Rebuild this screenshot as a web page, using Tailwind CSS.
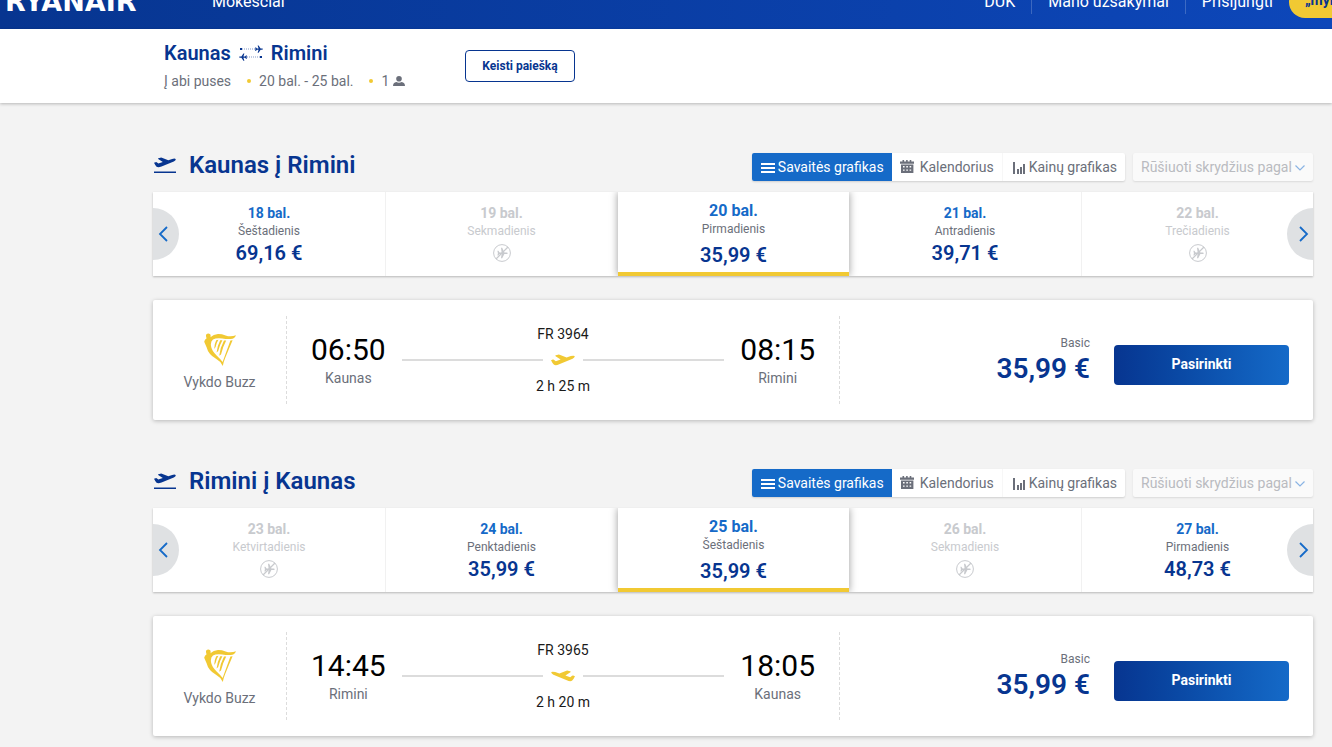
<!DOCTYPE html>
<html lang="lt">
<head>
  <meta charset="UTF-8" />
  <meta name="viewport" content="width=device-width, initial-scale=1.0" />
  <title>Kaunas - Rimini | Ryanair</title>
  <script src="https://cdn.jsdelivr.net/npm/@tailwindcss/browser@4"></script>
</head>
<body class="bg-[#f3f3f3] font-['Roboto','Liberation_Sans',sans-serif] text-sm leading-5 text-[#6b6f7a] overflow-x-hidden">

  <!-- shared icons -->
  <svg class="hidden">
    <symbol id="plane" viewBox="0 0 24 12">
      <path d="M0 6.2 1.8 5.6Q2.4 5.4 2.9 5.8L4.8 7.2 9.6 5.5 4.6 2.2Q4 1.6 4.8 1.3L7 .7Q7.8.4 8.6.8L15.6 3.5 19.8 2.1Q22.8 1.2 23.6 2.1 24.2 3.4 21.6 4.8L8.2 10.3Q4.6 11.8 2.8 10.6 1.6 9.4 0 6.2Z" />
    </symbol>
    <symbol id="no-flight" viewBox="0 0 18 18">
      <circle cx="9" cy="9" r="8.4" fill="none" stroke="currentColor" />
      <path d="M3 15 15 3" stroke="currentColor" stroke-width="1.2" />
      <path fill="currentColor" d="M4.4 6.8h1l1.2 1.6h2L8 3.8h1.2l2.2 4.6h2.2q1.2.3 1.2.8t-1.2.8h-2.2l-2.2 4.2H8l.6-4.2h-2l-1.2 1.4h-1l.5-2.1z" />
    </symbol>
    <symbol id="chevron-left" viewBox="0 0 10 16">
      <path d="M9 1 2 8l7 7" fill="none" stroke="currentColor" stroke-width="1.8" />
    </symbol>
    <symbol id="chevron-right" viewBox="0 0 10 16">
      <path d="m1 1 7 7-7 7" fill="none" stroke="currentColor" stroke-width="1.8" />
    </symbol>
    <symbol id="list" viewBox="0 0 14 12">
      <path d="M0 1h14v2H0zM0 5h14v2H0zM0 9h14v2H0z" />
    </symbol>
    <symbol id="calendar" viewBox="0 0 14 13">
      <path fill-rule="evenodd" d="M2.5 0h1.6v1.5h2V0h1.6v1.5h2V0h1.6v1.5H14v2.3H0V1.500h2.500zM1 4.400h12.400V13H1zM3 6v1.400h1.600V6zm3.300 0v1.400h1.600V6zm3.300 0v1.400h1.600V6zM3 9.400v1.400h1.600V9.400zm3.300 0v1.400h1.600V9.400zm3.300 0v1.400h1.600V9.400z" />
    </symbol>
    <symbol id="bars" viewBox="0 0 12 12">
      <path d="M0 0h2v12H0zM4 7h2v5H4zM7 5h2v7H7zM10 2h2v10h-2z" />
    </symbol>
    <symbol id="harp" viewBox="0 0 32 33">
      <path d="M2.2 1.4Q4.2-.1 6.2 1.3 7 2.6 6.4 4.2 9.4 1.2 14 1 17.6.9 21.6 2.4 26.6 4.2 32 2.2 30.8 5.6 26.6 6 22.4 6.2 18.2 5.4 12 4.6 9 6.6 6.4 8.4 7 13 7.6 17.6 12.6 22.4 17 26.4 18.6 29L26.4 7.400 28.600 7.200Q24.600 16.600 21.400 24.400 19.400 29 18.800 33 16.600 28.200 12 25.800 4.400 21.400 2.600 14.200L.2 8.800Q.6 6.600 2.600 5.200 1.600 3 2.200 1.400Z" />
      <path d="M12.200 7.200 14.400 6.800Q12.400 10 11.600 14L10.200 16Q10.200 11 12.200 7.200ZM16.200 7.200 18.400 7.200Q15.600 12 14.200 18L12.600 19.600Q13.200 12.800 16.200 7.200ZM20 7.600 22.200 7.600Q18.800 14 17 21.600L15.200 22.800Q16.200 14.600 20 7.600Z" />
    </symbol>
  </svg>

  <header class="h-[29px] overflow-hidden flex items-end bg-linear-to-r from-[#073590] to-[#0d47ba] text-white text-base leading-6 whitespace-nowrap">
    <a href="#" class="ml-[5px] mb-[15px] w-[207px] font-['DejaVu_Sans'] font-bold text-[27px]">RYANAIR</a>
    <a href="#" class="mb-[15px]">Mokesčiai</a>
    <nav class="ml-auto flex items-end">
      <a href="#" class="mb-[15px] pr-4">DUK</a>
      <a href="#" class="mb-[15px] px-4 border-x border-white/20">Mano užsakymai</a>
      <a href="#" class="mb-[15px] px-4">Prisijungti</a>
      <a href="#" class="mb-[11px] h-8 w-[43px] pl-4 overflow-hidden rounded-l-full bg-[#f1c933] text-[#073590] text-sm leading-7 font-bold">„myRyanair“</a>
    </nav>
  </header>

  <div class="relative flex items-center gap-15 bg-white pl-[164px] pr-5 py-3 shadow-[0_1px_3px_rgba(0,0,0,0.25)]">
    <div class="flex flex-col gap-[6px]">
      <div class="flex items-center gap-2 text-xl leading-6 font-semibold text-[#073590]">
        Kaunas
        <svg class="w-6 h-4" viewBox="0 0 24 16" fill="#073590">
          <path d="M3 4h13M8 12h13" stroke="#073590" stroke-opacity=".5" stroke-dasharray="1 1" />
          <path d="M1 3h2v2H1zM21 11h2v2h-2z" />
          <path d="M16 2.4h1l1 1.1h1.6L18.6.4h1l2 3.1h1.6q.8.2.8.6t-.8.6h-1.6l-2 3.1h-1l1-3.1H18l-1 1.1h-1l.5-1.7zM8 10.4H7l-1 1.1H4.400L5.400 8.400h-1l-2 3.100H.8Q0 11.700 0 12.100t.8.600h1.600l2 3.100h1l-1-3.100H6l1 1.100h1l-.5-1.700z" />
        </svg>
        Rimini
      </div>
      <div class="flex items-center">
        <span>Į abi puses</span>
        <span class="ml-4 mr-2 size-1 rounded-full bg-[#f1c933]"></span>
        <span>20 bal. - 25 bal.</span>
        <span class="ml-4 mr-2 size-1 rounded-full bg-[#f1c933]"></span>
        <span>1</span>
        <svg class="ml-1 w-3 h-[10px]" viewBox="0 0 12 10" fill="currentColor">
          <circle cx="6" cy="2.800" r="2.800" />
          <path d="M0 10Q0 6.800 3.400 6.100 6 7.400 8.600 6.100 12 6.800 12 10Z" />
        </svg>
      </div>
    </div>
    <button type="button" class="h-8 px-4 rounded border border-[#073590] text-xs font-bold text-[#073590]">Keisti paiešką</button>
  </div>

  <main class="pl-[153px] pr-[19px] pt-[46px] pb-3 flex flex-col gap-[45px]">

    <section>
      <div class="flex items-end">
        <h2 class="flex items-center gap-3 text-2xl leading-8 font-semibold text-[#073590]">
          <svg class="w-6 h-4" viewBox="0 0 24 16" fill="#073590">
            <use href="#plane" x="1" width="22" height="11" />
            <path d="M1 14.500h22V16H1z" />
          </svg>
          Kaunas į Rimini
        </h2>
        <div class="ml-auto flex h-7 rounded-xs bg-white shadow-[0_1px_2px_rgba(0,0,0,0.15)]">
          <button type="button" class="flex items-center gap-[3px] pl-[9px] pr-2 pb-px rounded-l-xs bg-[#156ac8] text-white">
            <svg class="w-[14px] h-3 mt-[2px]" fill="currentColor"><use href="#list" /></svg>Savaitės grafikas
          </button>
          <button type="button" class="flex items-center gap-[6px] px-2 pb-px border-r border-[#f7f7f7]">
            <svg class="w-[14px] h-[13px]" fill="currentColor"><use href="#calendar" /></svg>Kalendorius
          </button>
          <button type="button" class="flex items-center gap-1 pl-[10px] pr-2 pb-px">
            <svg class="w-3 h-3 mt-[2px]" fill="currentColor"><use href="#bars" /></svg>Kainų grafikas
          </button>
        </div>
        <div class="relative ml-2">
          <select aria-label="Rūšiuoti skrydžius pagal" class="w-[180px] h-7 pl-2 appearance-none rounded-xs bg-[#fafafa] text-[#b9bbc0] shadow-[0_1px_2px_rgba(0,0,0,0.1)]">
            <option>Rūšiuoti skrydžius pagal</option>
          </select>
          <svg class="absolute right-2 top-3 w-[10px] h-[6px] pointer-events-none" viewBox="0 0 10 6"><path d="m.5.500 4.500 4.500L9.500.5" fill="none" stroke="#8ab4e4" stroke-width="1.200" /></svg>
        </div>
      </div>

      <div class="relative mt-[11px] grid grid-cols-5 h-21 bg-white text-center shadow-[0_1px_2px_rgba(0,0,0,0.25)]">
        <button type="button" class="pt-[11px] flex flex-col items-center">
          <span class="font-bold text-[#156ac8]">18 bal.</span>
          <span class="text-xs">Šeštadienis</span>
          <span class="text-xl leading-7 font-semibold text-[#073590]">69,16 €</span>
        </button>
        <button type="button" disabled class="pt-[11px] flex flex-col items-center border-l border-[#f1f1f1] text-[#c8cace]">
          <span class="font-bold">19 bal.</span>
          <span class="text-xs">Sekmadienis</span>
          <svg class="mt-[5px] size-[18px]"><use href="#no-flight" /></svg>
        </button>
        <button type="button" class="relative ml-px pt-[9px] flex flex-col items-center bg-white border-b-4 border-[#f1c933] shadow-[0_0_8px_rgba(0,0,0,0.4)] [clip-path:inset(0_-12px_0_-12px)]">
          <span class="text-base leading-5 font-bold text-[#156ac8]">20 bal.</span>
          <span class="text-xs">Pirmadienis</span>
          <span class="mt-1 text-xl leading-7 font-semibold text-[#073590]">35,99 €</span>
        </button>
        <button type="button" class="pt-[11px] flex flex-col items-center">
          <span class="font-bold text-[#156ac8]">21 bal.</span>
          <span class="text-xs">Antradienis</span>
          <span class="text-xl leading-7 font-semibold text-[#073590]">39,71 €</span>
        </button>
        <button type="button" disabled class="pt-[11px] flex flex-col items-center border-l border-[#f1f1f1] text-[#c8cace]">
          <span class="font-bold">22 bal.</span>
          <span class="text-xs">Trečiadienis</span>
          <svg class="mt-[5px] size-[18px]"><use href="#no-flight" /></svg>
        </button>
        <button type="button" aria-label="Atgal" class="absolute left-0 top-4 w-[26px] h-13 pl-[5px] rounded-r-full bg-[#dfe1e3] text-[#156ac8]">
          <svg class="w-[10px] h-4"><use href="#chevron-left" /></svg>
        </button>
        <button type="button" aria-label="Pirmyn" class="absolute right-0 top-4 w-[26px] h-13 pl-3 rounded-l-full bg-[#dfe1e3] text-[#156ac8]">
          <svg class="w-[10px] h-4"><use href="#chevron-right" /></svg>
        </button>
      </div>

      <div class="mt-6 h-30 grid grid-cols-[133px_554fr_473fr] items-center rounded-xs bg-white shadow-[0_1px_4px_rgba(0,0,0,0.25)]">
        <div class="flex flex-col items-center gap-1 pt-[6px]">
          <svg class="w-8 h-[33px]" fill="#f1c933"><use href="#harp" /></svg>
          <span class="leading-6">Vykdo Buzz</span>
        </div>
        <div class="h-22 px-6 flex items-center gap-4 border-x border-dashed border-[#dcdcdc]">
          <div class="text-center">
            <div class="text-[30px] leading-9 text-black">06:50</div>
            <div>Kaunas</div>
          </div>
          <div class="flex-1 text-center text-[#1a1a1a]">
            <div>FR 3964</div>
            <div class="my-[6px] h-5 flex items-center gap-2">
              <span class="h-[2px] flex-1 bg-[#dcdcdc]"></span>
              <svg class="w-6 h-3" fill="#f1c933"><use href="#plane" /></svg>
              <span class="h-[2px] flex-1 bg-[#dcdcdc]"></span>
            </div>
            <div>2 h 25 m</div>
          </div>
          <div class="text-center">
            <div class="text-[30px] leading-9 text-black">08:15</div>
            <div>Rimini</div>
          </div>
        </div>
        <div class="pb-[2px] pr-6 flex justify-end items-end gap-6">
          <div class="text-right">
            <div class="text-xs leading-5">Basic</div>
            <div class="text-[28px] leading-8 font-semibold text-[#073590]">35,99 €</div>
          </div>
          <button type="button" class="w-[175px] h-10 pb-[2px] rounded bg-linear-to-r from-[#073590] to-[#156ac8] font-bold text-white">Pasirinkti</button>
        </div>
      </div>
    </section>

    <section>
      <div class="flex items-end">
        <h2 class="flex items-center gap-3 text-2xl leading-8 font-semibold text-[#073590]">
          <svg class="w-6 h-4" viewBox="0 0 24 16" fill="#073590">
            <use href="#plane" x="1" width="22" height="11" />
            <path d="M1 14.500h22V16H1z" />
          </svg>
          Rimini į Kaunas
        </h2>
        <div class="ml-auto flex h-7 rounded-xs bg-white shadow-[0_1px_2px_rgba(0,0,0,0.15)]">
          <button type="button" class="flex items-center gap-[3px] pl-[9px] pr-2 pb-px rounded-l-xs bg-[#156ac8] text-white">
            <svg class="w-[14px] h-3 mt-[2px]" fill="currentColor"><use href="#list" /></svg>Savaitės grafikas
          </button>
          <button type="button" class="flex items-center gap-[6px] px-2 pb-px border-r border-[#f7f7f7]">
            <svg class="w-[14px] h-[13px]" fill="currentColor"><use href="#calendar" /></svg>Kalendorius
          </button>
          <button type="button" class="flex items-center gap-1 pl-[10px] pr-2 pb-px">
            <svg class="w-3 h-3 mt-[2px]" fill="currentColor"><use href="#bars" /></svg>Kainų grafikas
          </button>
        </div>
        <div class="relative ml-2">
          <select aria-label="Rūšiuoti skrydžius pagal" class="w-[180px] h-7 pl-2 appearance-none rounded-xs bg-[#fafafa] text-[#b9bbc0] shadow-[0_1px_2px_rgba(0,0,0,0.1)]">
            <option>Rūšiuoti skrydžius pagal</option>
          </select>
          <svg class="absolute right-2 top-3 w-[10px] h-[6px] pointer-events-none" viewBox="0 0 10 6"><path d="m.5.500 4.500 4.500L9.500.5" fill="none" stroke="#8ab4e4" stroke-width="1.200" /></svg>
        </div>
      </div>

      <div class="relative mt-[11px] grid grid-cols-5 h-21 bg-white text-center shadow-[0_1px_2px_rgba(0,0,0,0.25)]">
        <button type="button" disabled class="pt-[11px] flex flex-col items-center text-[#c8cace]">
          <span class="font-bold">23 bal.</span>
          <span class="text-xs">Ketvirtadienis</span>
          <svg class="mt-[5px] size-[18px]"><use href="#no-flight" /></svg>
        </button>
        <button type="button" class="pt-[11px] flex flex-col items-center border-l border-[#f1f1f1]">
          <span class="font-bold text-[#156ac8]">24 bal.</span>
          <span class="text-xs">Penktadienis</span>
          <span class="text-xl leading-7 font-semibold text-[#073590]">35,99 €</span>
        </button>
        <button type="button" class="relative ml-px pt-[9px] flex flex-col items-center bg-white border-b-4 border-[#f1c933] shadow-[0_0_8px_rgba(0,0,0,0.4)] [clip-path:inset(0_-12px_0_-12px)]">
          <span class="text-base leading-5 font-bold text-[#156ac8]">25 bal.</span>
          <span class="text-xs">Šeštadienis</span>
          <span class="mt-1 text-xl leading-7 font-semibold text-[#073590]">35,99 €</span>
        </button>
        <button type="button" disabled class="pt-[11px] flex flex-col items-center text-[#c8cace]">
          <span class="font-bold">26 bal.</span>
          <span class="text-xs">Sekmadienis</span>
          <svg class="mt-[5px] size-[18px]"><use href="#no-flight" /></svg>
        </button>
        <button type="button" class="pt-[11px] flex flex-col items-center border-l border-[#f1f1f1]">
          <span class="font-bold text-[#156ac8]">27 bal.</span>
          <span class="text-xs">Pirmadienis</span>
          <span class="text-xl leading-7 font-semibold text-[#073590]">48,73 €</span>
        </button>
        <button type="button" aria-label="Atgal" class="absolute left-0 top-4 w-[26px] h-13 pl-[5px] rounded-r-full bg-[#dfe1e3] text-[#156ac8]">
          <svg class="w-[10px] h-4"><use href="#chevron-left" /></svg>
        </button>
        <button type="button" aria-label="Pirmyn" class="absolute right-0 top-4 w-[26px] h-13 pl-3 rounded-l-full bg-[#dfe1e3] text-[#156ac8]">
          <svg class="w-[10px] h-4"><use href="#chevron-right" /></svg>
        </button>
      </div>

      <div class="mt-6 h-30 grid grid-cols-[133px_554fr_473fr] items-center rounded-xs bg-white shadow-[0_1px_4px_rgba(0,0,0,0.25)]">
        <div class="flex flex-col items-center gap-1 pt-[6px]">
          <svg class="w-8 h-[33px]" fill="#f1c933"><use href="#harp" /></svg>
          <span class="leading-6">Vykdo Buzz</span>
        </div>
        <div class="h-22 px-6 flex items-center gap-4 border-x border-dashed border-[#dcdcdc]">
          <div class="text-center">
            <div class="text-[30px] leading-9 text-black">14:45</div>
            <div>Rimini</div>
          </div>
          <div class="flex-1 text-center text-[#1a1a1a]">
            <div>FR 3965</div>
            <div class="my-[6px] h-5 flex items-center gap-2">
              <span class="h-[2px] flex-1 bg-[#dcdcdc]"></span>
              <svg class="w-6 h-3 -scale-x-100" fill="#f1c933"><use href="#plane" /></svg>
              <span class="h-[2px] flex-1 bg-[#dcdcdc]"></span>
            </div>
            <div>2 h 20 m</div>
          </div>
          <div class="text-center">
            <div class="text-[30px] leading-9 text-black">18:05</div>
            <div>Kaunas</div>
          </div>
        </div>
        <div class="pb-[2px] pr-6 flex justify-end items-end gap-6">
          <div class="text-right">
            <div class="text-xs leading-5">Basic</div>
            <div class="text-[28px] leading-8 font-semibold text-[#073590]">35,99 €</div>
          </div>
          <button type="button" class="w-[175px] h-10 pb-[2px] rounded bg-linear-to-r from-[#073590] to-[#156ac8] font-bold text-white">Pasirinkti</button>
        </div>
      </div>
    </section>

  </main>
</body>
</html>
